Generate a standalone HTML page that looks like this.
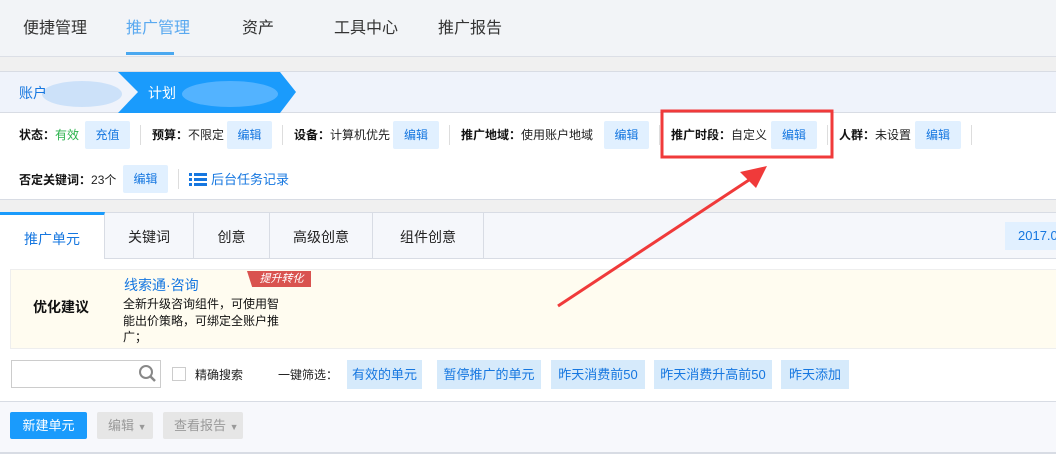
<!DOCTYPE html>
<html><head><meta charset="utf-8"><style>
*{margin:0;padding:0;box-sizing:border-box}
body{width:1056px;height:454px;overflow:hidden;background:#f0f0f0;font-family:"Liberation Sans","Noto Sans CJK SC",sans-serif;font-size:13px;color:#222;position:relative}
.a{position:absolute;white-space:nowrap}
.nav{left:0;top:0;width:1056px;height:57px;background:#f2f4f7;border-bottom:1px solid #dcdfe6}
.nav span{position:absolute;top:14px;font-size:16px;color:#333}
.bc{left:0;top:71px;width:1056px;height:42px;background:#eff3fb;border-top:1px solid #d8dce4;border-bottom:1px solid #d8dce4}
.info{left:0;top:113px;width:1056px;height:87px;background:#fff;border-bottom:1px solid #d8dce4;font-size:12px}
.info .t{position:absolute;height:28px;line-height:28px;white-space:nowrap}
.btn{position:absolute;height:28px;line-height:28px;text-align:center;background:#e1f0ff;color:#1677e0;font-size:12px;border-radius:2px}
b{font-weight:bold;color:#111}
.sep{position:absolute;width:1px;height:20px;background:#ddd}
.tabs{left:0;top:212px;width:1056px;height:47px;background:#f5f7fb;border-top:1px solid #d8dce4;border-bottom:1px solid #d8dce4}
.tab{position:absolute;top:0;height:46px;line-height:48px;text-align:center;font-size:14px;border-right:1px solid #d8dce4;color:#222}
.main{left:0;top:259px;width:1056px;height:142px;background:#fff}
.fb{position:absolute;top:360px;height:29px;line-height:29px;background:#d6eafb;color:#1677e0;text-align:center;font-size:13px}
.bot{left:0;top:401px;width:1056px;height:53px;background:#f7f8fc;border-top:1px solid #d8dce4}
.gb{position:absolute;top:412px;height:27px;line-height:27px;background:#e6e6e6;color:#999;font-size:13px;border-radius:2px;padding-left:11px}
</style></head><body>
<div class="a nav">
<span style="left:23px">便捷管理</span>
<span style="left:126px;color:#5aa9f0">推广管理</span>
<span style="left:242px">资产</span>
<span style="left:334px">工具中心</span>
<span style="left:438px">推广报告</span>
<div style="position:absolute;left:126px;top:52px;width:48px;height:3px;background:#4aa8f0"></div>
</div>
<div class="a bc">
<svg style="position:absolute;left:0;top:0" width="320" height="41">
<polygon points="118,0 280,0 296,20 280,41 118,41 138,20" fill="#1a9bfc"/>
<ellipse cx="82" cy="22" rx="40" ry="13" fill="#c8dff8" opacity=".9"/>
<ellipse cx="230" cy="22" rx="48" ry="13" fill="#5ab6ff" opacity=".9"/>
</svg>
<span class="a" style="left:19px;top:11px;font-size:14px;color:#1677e0">账户</span>
<span class="a" style="left:148px;top:11px;font-size:14px;color:#fff">计划</span>
</div>
<div class="a info">
<span class="t" style="left:19px;top:8px"><b>状态：</b><span style="color:#2bb24c">有效</span></span>
<div class="btn" style="left:85px;top:8px;width:45px">充值</div>
<div class="sep" style="left:140px;top:12px"></div>
<span class="t" style="left:152px;top:8px"><b>预算：</b>不限定</span>
<div class="btn" style="left:227px;top:8px;width:45px">编辑</div>
<div class="sep" style="left:282px;top:12px"></div>
<span class="t" style="left:294px;top:8px"><b>设备：</b>计算机优先</span>
<div class="btn" style="left:393px;top:8px;width:46px">编辑</div>
<div class="sep" style="left:449px;top:12px"></div>
<span class="t" style="left:461px;top:8px"><b>推广地域：</b>使用账户地域</span>
<div class="btn" style="left:604px;top:8px;width:45px">编辑</div>
<div class="sep" style="left:659px;top:12px"></div>
<span class="t" style="left:671px;top:8px"><b>推广时段：</b>自定义</span>
<div class="btn" style="left:771px;top:8px;width:46px">编辑</div>
<div class="sep" style="left:827px;top:12px"></div>
<span class="t" style="left:839px;top:8px"><b>人群：</b>未设置</span>
<div class="btn" style="left:915px;top:8px;width:46px">编辑</div>
<div class="sep" style="left:971px;top:12px"></div>
<span class="t" style="left:19px;top:53px"><b>否定关键词：</b>23个</span>
<div class="btn" style="left:123px;top:52px;width:45px">编辑</div>
<div class="sep" style="left:178px;top:56px"></div>
<svg style="position:absolute;left:189px;top:60px" width="18" height="13"><g fill="#1677e0"><rect x="0" y="0" width="3" height="3"/><rect x="5" y="0" width="13" height="3"/><rect x="0" y="5" width="3" height="3"/><rect x="5" y="5" width="13" height="3"/><rect x="0" y="10" width="3" height="3"/><rect x="5" y="10" width="13" height="3"/></g></svg>
<span class="t" style="left:211px;top:53px;color:#1677e0;font-size:13px">后台任务记录</span>
</div>
<div class="a tabs">
<div class="tab" style="left:0;width:105px;background:#fff;color:#1677e0;border-top:3px solid #1a9bfc;top:-1px;height:48px">推广单元</div>
<div class="tab" style="left:105px;width:89px">关键词</div>
<div class="tab" style="left:194px;width:76px">创意</div>
<div class="tab" style="left:270px;width:103px">高级创意</div>
<div class="tab" style="left:373px;width:111px">组件创意</div>
<div style="position:absolute;left:1005px;top:9px;width:60px;height:28px;line-height:28px;background:#e1f0ff;color:#1677e0;padding-left:13px">2017.0</div>
</div>
<div class="a main"></div>
<div class="a" style="left:10px;top:269px;width:1050px;height:80px;background:#fffcf0;border:1px solid #eee"></div>
<span class="a" style="left:33px;top:297px;font-size:14px;font-weight:bold;color:#111">优化建议</span>
<span class="a" style="left:124px;top:275px;font-size:14px;color:#1677e0">线索通·咨询</span>
<div class="a" style="left:247px;top:271px;width:64px;height:16px;background:#d9534f;clip-path:polygon(0 0,100% 0,100% 100%,8% 100%);color:#fff;font-style:italic;font-size:11px;line-height:16px;text-align:center;padding-left:5px">提升转化</div>
<div class="a" style="left:123px;top:296px;font-size:12px;line-height:16.5px;color:#111;white-space:normal;width:160px">全新升级咨询组件，可使用智能出价策略，可绑定全账户推广；</div>
<div class="a" style="left:11px;top:360px;width:150px;height:28px;border:1px solid #ccc;background:#fff"></div>
<svg class="a" style="left:138px;top:364px" width="20" height="20"><circle cx="8" cy="8" r="6" fill="none" stroke="#888" stroke-width="2"/><line x1="12.5" y1="12.5" x2="17" y2="17" stroke="#888" stroke-width="2.5"/></svg>
<div class="a" style="left:172px;top:367px;width:14px;height:14px;border:1px solid #ccc;background:#fff"></div>
<span class="a" style="left:195px;top:366px;font-size:12px">精确搜索</span>
<span class="a" style="left:278px;top:366px;font-size:12px">一键筛选：</span>
<div class="fb" style="left:347px;width:75px">有效的单元</div>
<div class="fb" style="left:437px;width:104px">暂停推广的单元</div>
<div class="fb" style="left:551px;width:94px">昨天消费前50</div>
<div class="fb" style="left:654px;width:118px">昨天消费升高前50</div>
<div class="fb" style="left:781px;width:68px">昨天添加</div>
<div class="a bot"></div>
<div class="a" style="left:10px;top:412px;width:77px;height:27px;line-height:27px;background:#1a9bfc;color:#fff;text-align:center;border-radius:2px">新建单元</div>
<div class="gb" style="left:97px;width:56px">编辑 <span style="font-size:9px">▼</span></div>
<div class="gb" style="left:163px;width:80px">查看报告 <span style="font-size:9px">▼</span></div>
<div class="a" style="left:0;top:452px;width:1056px;height:2px;background:#d8dce4"></div>
<svg class="a" style="left:0;top:0" width="1056" height="454">
<rect x="662" y="111" width="170" height="46" fill="none" stroke="#f03a3a" stroke-width="3"/>
<line x1="558" y1="306" x2="752" y2="178" stroke="#f03a3a" stroke-width="3"/>
<polygon points="767,166 740,172 756,188" fill="#f03a3a"/>
</svg>
</body></html>
